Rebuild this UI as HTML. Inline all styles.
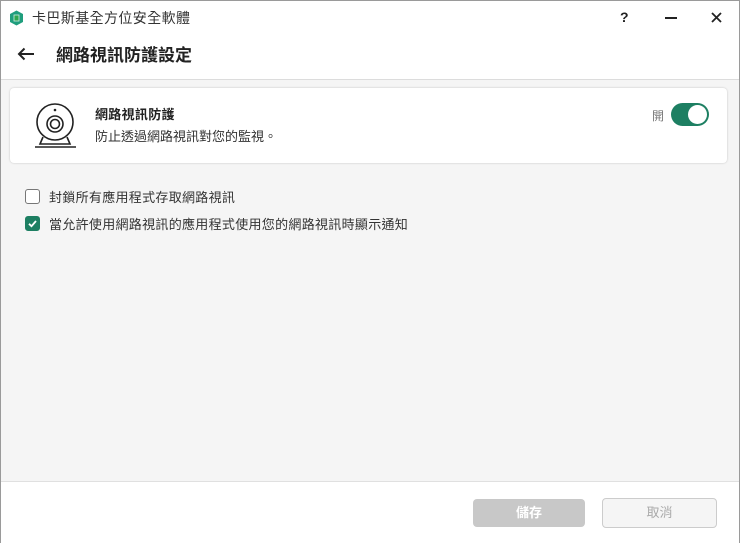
<html><head><style>
body{margin:0;width:740px;height:543px;font-family:"Liberation Sans","Noto Sans CJK TC",sans-serif;background:#fff;position:relative;overflow:hidden}
.win{position:absolute;left:0;top:0;width:738px;height:541px;border:1px solid #9a9a9a;background:#f5f5f5}
.top{position:absolute;left:0;top:0;width:738px;height:78px;background:#fff;border-bottom:1px solid #dcdcdc}
.t{position:absolute;white-space:nowrap;color:#222}
.card{position:absolute;left:9px;top:87px;width:717px;height:75px;background:#fff;border-radius:4px;box-shadow:0 0 2px rgba(0,0,0,.2)}
.foot{position:absolute;left:0;top:480px;width:738px;height:61px;background:#fff;border-top:1px solid #e0e0e0}
.cb{position:absolute;width:13px;height:13px;border:1.5px solid #777;border-radius:3px;background:#fff}
</style></head><body><div class="win">
<div class="top">
<svg style="position:absolute;left:8px;top:9px" width="15" height="16" viewBox="0 0 15 16"><path d="M7.5 0.5 L14 4 V12 L7.5 15.5 L1 12 V4Z" fill="#1f9e7d"/><rect x="5" y="5" width="5" height="6" fill="#3a4" stroke="#fff" stroke-width="0.8" opacity=".8"/></svg>
<div class="t" style="left:31px;top:7px;font-size:14px;letter-spacing:0.4px;color:#333">卡巴斯基全方位安全軟體</div>
<div class="t" style="left:619px;top:8px;font-size:14px;font-weight:bold">?</div>
<div style="position:absolute;left:664px;top:16px;width:12px;height:2px;background:#222"></div>
<svg style="position:absolute;left:710px;top:11px" width="11" height="11" viewBox="0 0 11 11"><path d="M1 1L10 10M10 1L1 10" stroke="#222" stroke-width="1.8"/></svg>
<svg style="position:absolute;left:16px;top:46px" width="18" height="14" viewBox="0 0 18 14"><path d="M17 7H2M7.5 1.5L2 7l5.5 5.5" fill="none" stroke="#222" stroke-width="2"/></svg>
<div class="t" style="left:55px;top:40px;font-size:17px;font-weight:bold">網路視訊防護設定</div>
</div>
<div class="card">
<svg style="position:absolute;left:24px;top:12px" width="44" height="50" viewBox="0 0 44 50"><g fill="none" stroke="#222" stroke-width="1.6"><circle cx="21" cy="22" r="18"/><circle cx="21" cy="24" r="8"/><circle cx="21" cy="24" r="4.5"/><path d="M9 37 L6 44 H36 L33 37"/><path d="M1 47H42"/></g><circle cx="21" cy="10" r="1.3" fill="#222"/></svg>
<div class="t" style="left:85px;top:16px;font-size:13px;letter-spacing:0.3px;font-weight:bold">網路視訊防護</div>
<div class="t" style="left:85px;top:38px;font-size:13px;color:#333">防止透過網路視訊對您的監視。</div>
<div class="t" style="left:642px;top:19px;font-size:12px;color:#777">開</div>
<div style="position:absolute;left:661px;top:15px;width:38px;height:23px;border-radius:12px;background:#1d7f62"><div style="position:absolute;right:2px;top:2px;width:19px;height:19px;border-radius:50%;background:#fff"></div></div>
</div>
<div class="cb" style="left:24px;top:188px"></div>
<div class="t" style="left:48px;top:186px;font-size:13px;letter-spacing:0.3px;color:#333">封鎖所有應用程式存取網路視訊</div>
<div class="cb" style="left:24px;top:215px;background:#1d7f62;border-color:#1d7f62"><svg width="13" height="13" viewBox="0 0 13 13"><path d="M3 6.8L5.5 9.2L10 4" fill="none" stroke="#fff" stroke-width="1.8"/></svg></div>
<div class="t" style="left:48px;top:213px;font-size:13px;letter-spacing:0.3px;color:#333">當允許使用網路視訊的應用程式使用您的網路視訊時顯示通知</div>
<div class="foot">
<div style="position:absolute;left:472px;top:17px;width:112px;height:28px;background:#c8c8c8;border-radius:4px;color:#fff;font-size:13px;text-align:center;line-height:28px;font-weight:bold">儲存</div>
<div style="position:absolute;left:601px;top:16px;width:113px;height:28px;background:#f5f5f5;border:1px solid #ccc;border-radius:4px;color:#aaa;font-size:13px;text-align:center;line-height:28px">取消</div>
</div>
</div></body></html>
